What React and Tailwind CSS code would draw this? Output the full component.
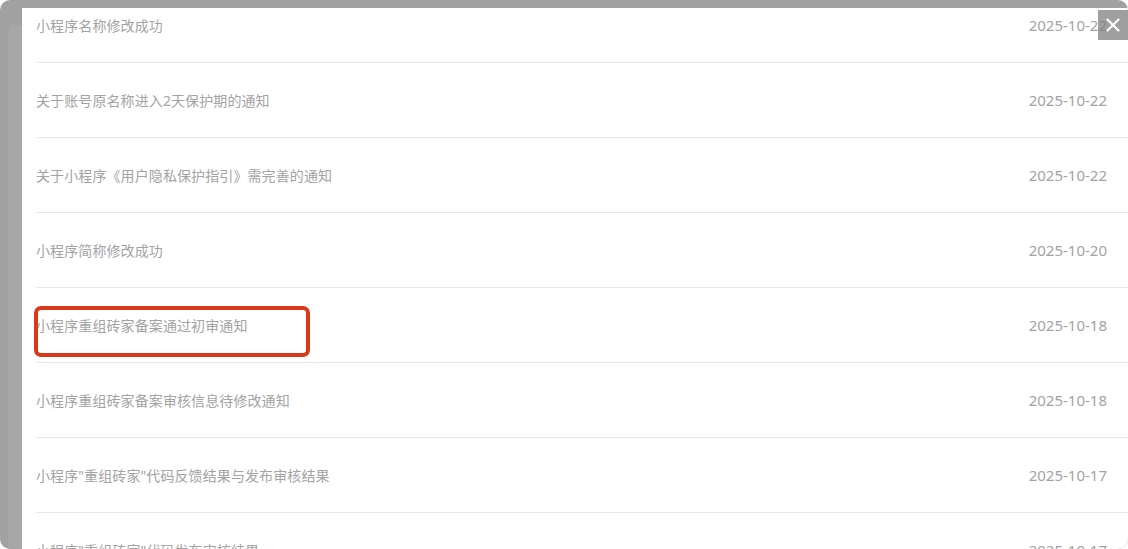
import { X } from 'lucide-react';

const notices = [
  { title: '小程序名称修改成功', date: '2025-10-22' },
  { title: '关于账号原名称进入2天保护期的通知', date: '2025-10-22' },
  { title: '关于小程序《用户隐私保护指引》需完善的通知', date: '2025-10-22' },
  { title: '小程序简称修改成功', date: '2025-10-20' },
  { title: '小程序重组砖家备案通过初审通知', date: '2025-10-18', marked: true },
  { title: '小程序重组砖家备案审核信息待修改通知', date: '2025-10-18' },
  { title: '小程序"重组砖家"代码反馈结果与发布审核结果', date: '2025-10-17' },
  { title: '小程序"重组砖家"代码发布审核结果', date: '2025-10-17' },
];

export default function App() {
  return (
    <div className="w-[1128px] h-[549px] bg-white overflow-hidden">
      <div
        className="relative w-full h-full bg-[#a1a1a1] rounded-[10px] flex pt-[8px] overflow-hidden"
        style={{ fontFamily: '"Noto Sans", "Noto Sans CJK SC", sans-serif' }}
      >
        {/* left strip */}
        <div className="w-[22px] shrink-0 flex pl-[8px] pt-[17px]">
          <div className="flex-1 bg-[#a7a7a7] rounded-tl-[6px]" />
        </div>

        {/* white panel */}
        <div className="flex-1 bg-white overflow-hidden">
          <ul className="-mt-[20px] pl-[14px]">
            {notices.map((n) => (
              <li
                key={n.title}
                className="relative h-[75px] border-b border-[#e8e8e8] flex items-center justify-between pr-[21px] text-[14px] text-[#a3a3a3]"
              >
                <span className="pt-[1px] tracking-[0.1px]">{n.title}</span>
                <span className="pt-[1px] text-[15px]">{n.date}</span>
                {n.marked && (
                  <div className="absolute left-[-2px] top-[18px] w-[276px] h-[51px] border-[4px] border-[#d8391a] rounded-[7px]" />
                )}
              </li>
            ))}
          </ul>
        </div>

        {/* close button */}
        <button className="absolute right-0 top-[10px] w-[30px] h-[30px] bg-[#7f7f7f]/75 flex items-center justify-center">
          <X size={22} strokeWidth={2.5} color="#ffffff" />
        </button>
      </div>
    </div>
  );
}
